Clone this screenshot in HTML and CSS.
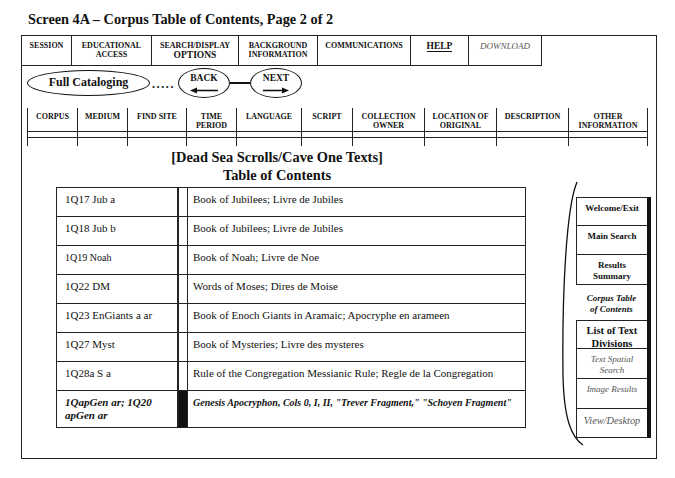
FILE: index.html
```html
<!DOCTYPE html>
<html>
<head>
<meta charset="utf-8">
<title>Screen 4A</title>
<link rel="stylesheet" href="styles.css">
</head>
<body>
<h1 class="title">Screen 4A – Corpus Table of Contents, Page 2 of 2</h1>
<div class="frame">
  <div class="menubar">
    <div class="mi w50">SESSION</div>
    <div class="mi w80">EDUCATIONAL<br>ACCESS</div>
    <div class="mi w87">SEARCH/DISPLAY<br><span class="big">OPTIONS</span></div>
    <div class="mi w79">BACKGROUND<br>INFORMATION</div>
    <div class="mi w93">COMMUNICATIONS</div>
    <div class="mi w58 help"><span>HELP</span></div>
    <div class="mi w73 dl">DOWNLOAD</div>
  </div>

  <div class="navrow">
    <div class="oval full">Full Cataloging</div>
    <div class="dots">.....</div>
    <div class="oval stepper">
      <span>BACK</span>
      <svg class="arrow" width="28" height="7" viewBox="0 0 28 7"><path d="M28 3.5H5" stroke="#111" stroke-width="1.6"/><path d="M0 3.5L7 0.5V6.5Z" fill="#111"/></svg>
    </div>
    <div class="link"></div>
    <div class="oval stepper">
      <span>NEXT</span>
      <svg class="arrow" width="26" height="7" viewBox="0 0 26 7"><path d="M0 3.5H21" stroke="#111" stroke-width="1.6"/><path d="M26 3.5L19 0.5V6.5Z" fill="#111"/></svg>
    </div>
  </div>

  <div class="cols">
    <div class="col"><div class="lab">CORPUS</div><div class="strip"></div><div class="tail"></div></div>
    <div class="col"><div class="lab">MEDIUM</div><div class="strip"></div><div class="tail"></div></div>
    <div class="col"><div class="lab">FIND SITE</div><div class="strip"></div><div class="tail"></div></div>
    <div class="col"><div class="lab">TIME<br>PERIOD</div><div class="strip"></div><div class="tail"></div></div>
    <div class="col"><div class="lab">LANGUAGE</div><div class="strip"></div><div class="tail"></div></div>
    <div class="col"><div class="lab">SCRIPT</div><div class="strip"></div><div class="tail"></div></div>
    <div class="col"><div class="lab">COLLECTION<br>OWNER</div><div class="strip"></div><div class="tail"></div></div>
    <div class="col"><div class="lab">LOCATION OF<br>ORIGINAL</div><div class="strip"></div><div class="tail"></div></div>
    <div class="col"><div class="lab">DESCRIPTION</div><div class="strip"></div><div class="tail"></div></div>
    <div class="col last"><div class="lab">OTHER<br>INFORMATION</div><div class="strip"></div><div class="tail"></div></div>
  </div>

  <div class="main">
    <div class="content">
      <h2 class="headline">[Dead Sea Scrolls/Cave One Texts]<br>Table of Contents</h2>
      <div class="toc">
        <div class="row"><div class="c1">1Q17 Jub a</div><div class="gap"></div><div class="c2">Book of Jubilees; Livre de Jubiles</div></div>
        <div class="row"><div class="c1">1Q18 Jub b</div><div class="gap"></div><div class="c2">Book of Jubilees; Livre de Jubiles</div></div>
        <div class="row"><div class="c1 sm">1Q19 Noah</div><div class="gap"></div><div class="c2">Book of Noah; Livre de Noe</div></div>
        <div class="row"><div class="c1">1Q22 DM</div><div class="gap"></div><div class="c2">Words of Moses; Dires de Moise</div></div>
        <div class="row"><div class="c1">1Q23 EnGiants a ar</div><div class="gap"></div><div class="c2">Book of Enoch Giants in Aramaic; Apocryphe en arameen</div></div>
        <div class="row"><div class="c1">1Q27 Myst</div><div class="gap"></div><div class="c2">Book of Mysteries; Livre des mysteres</div></div>
        <div class="row"><div class="c1">1Q28a S a</div><div class="gap"></div><div class="c2">Rule of the Congregation Messianic Rule; Regle de la Congregation</div></div>
        <div class="row lastrow"><div class="c1 bi">1QapGen ar; 1Q20<br>apGen ar</div><div class="gap filled"></div><div class="c2 bi fine">Genesis Apocryphon, Cols 0, I, II, "Trever Fragment," "Schoyen Fragment"</div></div>
      </div>
    </div>

    <div class="sidebar">
      <svg class="bracket" width="16" height="300" viewBox="0 0 16 300"><path d="M17 36 C6 62 2 150 3 230 C4 272 11 291 23 299" fill="none" stroke="#111" stroke-width="1.3"/></svg>
      <div class="sidebox">
        <div class="si b h28">Welcome/Exit</div>
        <div class="si b h29">Main Search</div>
        <div class="si b h30">Results<br>Summary</div>
        <div class="si bi h36 noleft">Corpus Table<br>of Contents</div>
        <div class="si b lg h28 clip">List of Text<br>Divisions</div>
        <div class="si it gray h30">Text Spatial<br>Search</div>
        <div class="si it gray h30">Image Results</div>
        <div class="si it gray vd h29">View/Desktop</div>
      </div>
    </div>
  </div>
</div>
</body>
</html>
```

FILE: styles.css
```css
* { box-sizing: border-box; }

body {
  margin: 0;
  width: 675px;
  background: #fff;
  color: #111;
  font-family: "Liberation Serif", "Times New Roman", serif;
}

.title {
  margin: 0;
  height: 35px;
  padding: 10px 0 0 28px;
  font-size: 14.3px;
  line-height: 18px;
  font-weight: bold;
}

.frame {
  margin-left: 21px;
  width: 636px;
  height: 424px;
  border: 1px solid #222;
}

/* top menu */
.menubar { display: flex; height: 30px; }
.mi {
  height: 30px;
  border-right: 1px solid #222;
  border-bottom: 1px solid #222;
  text-align: center;
  font-size: 8px;
  line-height: 9px;
  font-weight: bold;
  padding-top: 5px;
}
.w50 { width: 50px; }
.w80 { width: 80px; }
.w87 { width: 87px; }
.w79 { width: 79px; }
.w93 { width: 93px; }
.w58 { width: 58px; }
.w73 { width: 73px; }
.mi .big { font-size: 9.5px; line-height: 11px; }
.help { font-size: 9.5px; line-height: 11px; }
.help span { border-bottom: 1px solid #111; }
.dl { font-weight: normal; font-style: italic; font-size: 9px; line-height: 11px; color: #555; }

/* nav ovals */
.navrow {
  display: flex;
  align-items: center;
  height: 30px;
  margin: 2px 0 10px 5px;
}
.oval {
  border: 1.3px solid #111;
  border-radius: 50%;
  font-weight: bold;
  text-align: center;
}
.full {
  width: 123px;
  height: 26px;
  font-size: 12px;
  line-height: 23px;
}
.dots {
  width: 28px;
  padding-left: 2px;
  font-weight: bold;
  font-size: 12px;
  line-height: 12px;
  padding-top: 2px;
  letter-spacing: 1.6px;
}
.stepper {
  width: 52px;
  height: 30px;
  font-size: 9.5px;
  line-height: 10px;
  padding-top: 4px;
  display: flex;
  flex-direction: column;
  align-items: center;
}
.arrow { display: block; margin-top: 4px; }
.link { width: 20px; height: 2px; background: #111; }

/* column header */
.cols {
  display: grid;
  grid-template-columns: 50px 50px 59px 50px 65px 51px 72px 72px 72px 80px;
  margin-left: 5px;
  width: 621px;
}
.col { border-left: 1px solid #222; }
.col.last { border-right: 1px solid #222; }
.lab {
  height: 24px;
  border-bottom: 1px solid #222;
  text-align: center;
  font-size: 8px;
  line-height: 9px;
  font-weight: bold;
  padding-top: 4px;
}
.strip { height: 6px; border-bottom: 1px solid #222; }
.tail { height: 8px; }

/* main */
.main { display: flex; }
.content { width: 510px; }
.headline {
  margin: 0;
  padding-top: 2px;
  text-align: center;
  font-size: 14.4px;
  line-height: 18px;
  font-weight: bold;
}
.toc {
  margin: 3px 0 0 34px;
  width: 470px;
  border: 1px solid #222;
}
.row {
  display: flex;
  height: 29px;
  border-bottom: 1px solid #222;
}
.row.lastrow { height: 36px; border-bottom: none; }
.c1 {
  width: 122px;
  flex: none;
  border-right: 2px solid #222;
  padding: 5px 0 0 8px;
  font-size: 11px;
  line-height: 13px;
}
.c1.sm { font-size: 10px; }
.gap { width: 9px; flex: none; border-right: 1px solid #222; }
.gap.filled { background: #111; }
.c2 {
  flex: 1;
  padding: 5px 0 0 5px;
  font-size: 11px;
  line-height: 13px;
}
.bi { font-weight: bold; font-style: italic; }
.c2.fine { font-size: 10px; }

/* sidebar */
.sidebar { display: flex; margin-left: 28px; }
.bracket { display: block; overflow: visible; }
.sidebox {
  width: 75px;
  margin-top: 51px;
  border-right: 4px solid #111;
  border-top: 1px solid #222;
  align-self: flex-start;
}
.si {
  border-left: 1px solid #222;
  border-bottom: 1px solid #222;
  text-align: center;
  font-size: 9px;
  line-height: 11px;
  padding-top: 5px;
}
.si.noleft { border-left: none; padding-top: 8px; }
.b { font-weight: bold; }
.it { font-style: italic; }
.gray { color: #555; }
.lg { font-size: 10.5px; line-height: 13px; padding-top: 3px; }
.clip { overflow: hidden; }
.vd { font-size: 10.3px; padding-top: 6px; }
.h28 { height: 28px; }
.h29 { height: 29px; }
.h30 { height: 30px; }
.h36 { height: 36px; }
```
